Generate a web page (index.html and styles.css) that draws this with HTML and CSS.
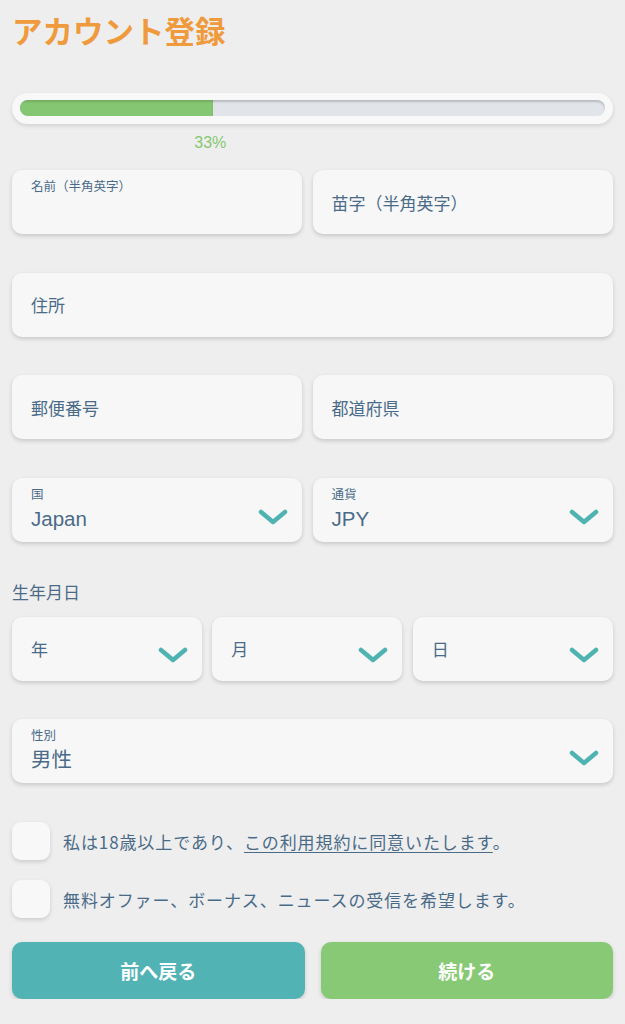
FILE: index.html
```html
<!DOCTYPE html>
<html lang="ja">
<head>
    <meta charset="UTF-8" />
    <meta name="viewport" content="width=device-width, initial-scale=1.0"/>
    <title>アカウント登録</title>
    <link rel="stylesheet" href="styles.css">
</head>
<body>
    <div id="app">
        <h1 class="title">アカウント登録</h1>

        <!-- Progress -->
        <div class="progress">
            <div class="progress-track">
                <div class="progress-fill" style="width: 33%"></div>
            </div>
        </div>
        <div class="progress-label">
            <span class="progress-spacer" style="width: 33%"></span>
            <span class="progress-text">33%</span>
        </div>

        <!-- Name -->
        <div class="row first">
            <div class="col">
                <div class="field">
                    <span class="field-label">名前（半角英字）</span>
                </div>
            </div>
            <div class="col">
                <div class="field">
                    <span class="field-placeholder">苗字（半角英字）</span>
                </div>
            </div>
        </div>

        <div class="row">
            <div class="col">
                <div class="field">
                    <span class="field-placeholder">住所</span>
                </div>
            </div>
        </div>

        <div class="row">
            <div class="col">
                <div class="field">
                    <span class="field-placeholder">郵便番号</span>
                </div>
            </div>
            <div class="col">
                <div class="field">
                    <span class="field-placeholder">都道府県</span>
                </div>
            </div>
        </div>

        <div class="row">
            <div class="col">
                <div class="field select">
                    <div class="select-body">
                        <span class="field-label">国</span>
                        <span class="field-value">Japan</span>
                    </div>
                    <svg class="chevron" viewBox="0 0 30 16"><path d="M3 3 L15 13 L27 3"/></svg>
                </div>
            </div>
            <div class="col">
                <div class="field select">
                    <div class="select-body">
                        <span class="field-label">通貨</span>
                        <span class="field-value">JPY</span>
                    </div>
                    <svg class="chevron" viewBox="0 0 30 16"><path d="M3 3 L15 13 L27 3"/></svg>
                </div>
            </div>
        </div>

        <div class="section-label">生年月日</div>
        <div class="row">
            <div class="col">
                <div class="field select">
                    <span class="field-placeholder">年</span>
                    <svg class="chevron low" viewBox="0 0 30 16"><path d="M3 3 L15 13 L27 3"/></svg>
                </div>
            </div>
            <div class="col">
                <div class="field select">
                    <span class="field-placeholder">月</span>
                    <svg class="chevron low" viewBox="0 0 30 16"><path d="M3 3 L15 13 L27 3"/></svg>
                </div>
            </div>
            <div class="col">
                <div class="field select">
                    <span class="field-placeholder">日</span>
                    <svg class="chevron low" viewBox="0 0 30 16"><path d="M3 3 L15 13 L27 3"/></svg>
                </div>
            </div>
        </div>

        <div class="row">
            <div class="col">
                <div class="field select">
                    <div class="select-body">
                        <span class="field-label">性別</span>
                        <span class="field-value">男性</span>
                    </div>
                    <svg class="chevron" viewBox="0 0 30 16"><path d="M3 3 L15 13 L27 3"/></svg>
                </div>
            </div>
        </div>

        <!-- Agreements -->
        <div class="checks">
            <label class="check">
                <span class="box"></span>
                <span class="check-text">私は18歳以上であり、<a href="#" class="link">この利用規約に同意いたします</a>。</span>
            </label>
            <label class="check">
                <span class="box"></span>
                <span class="check-text">無料オファー、ボーナス、ニュースの受信を希望します。</span>
            </label>
        </div>

        <div class="buttons">
            <button class="btn btn-back">前へ戻る</button>
            <button class="btn btn-next">続ける</button>
        </div>
    </div>
</body>
</html>
```

FILE: styles.css
```css
body {
    margin: 0;
    padding: 0;
    background: #eeeeee;
    font-family: "Liberation Sans", "Noto Sans CJK JP", sans-serif;
    color: #4a6b88;
}

#app {
    padding: 0 12px;
}

.title {
    margin: 12px 0 0;
    font-size: 30.5px;
    line-height: 36px;
    height: 36px;
    font-weight: 700;
    color: #ef9a3c;
    font-family: "Noto Sans CJK JP", sans-serif;
}

.progress {
    margin-top: 45px;
    background: #f8f8f8;
    border-radius: 16px;
    padding: 7px 8px 8px;
    box-shadow: 0 2px 4px rgba(0, 0, 0, 0.12);
}

.progress-track {
    height: 16px;
    border-radius: 8px;
    background: #e1e4e9;
    box-shadow: inset 0 2px 2px rgba(0, 0, 0, 0.18);
    overflow: hidden;
}

.progress-fill {
    height: 100%;
    background: #84c671;
    box-shadow: inset 0 2px 2px rgba(0, 0, 0, 0.12);
}

.progress-label {
    display: flex;
    margin-top: 9px;
    height: 20px;
    line-height: 20px;
}

.progress-text {
    transform: translateX(-50%);
    font-size: 16px;
    color: #86c872;
}

/* rows: equal columns, gutter inside every column but the last */
.row {
    display: grid;
    grid-auto-flow: column;
    grid-auto-columns: 1fr;
    margin-bottom: 38.7px;
}

.row.first {
    margin-top: 17px;
}

.col {
    min-width: 0;
}

.col:not(:last-child) {
    padding-right: 10.5px;
}

.field {
    height: 64px;
    box-sizing: border-box;
    background: #f7f7f7;
    border-radius: 10px;
    box-shadow: 0 2px 4px rgba(0, 0, 0, 0.16);
    padding: 0 19px;
    display: flex;
    align-items: center;
}

.field .field-label:only-child {
    align-self: flex-start;
    margin-top: 8px;
}

.field-label {
    font-size: 12.5px;
    line-height: 16px;
    font-family: "Noto Sans CJK JP", sans-serif;
}

.field-placeholder {
    font-size: 17px;
    font-family: "Noto Sans CJK JP", sans-serif;
}

.select {
    justify-content: space-between;
    padding-right: 14px;
}

.select-body {
    display: flex;
    flex-direction: column;
    align-self: flex-start;
    padding-top: 8px;
}

.field-value {
    font-size: 20.5px;
    line-height: 28px;
    margin-top: 3px;
}

.chevron {
    width: 30px;
    height: 16px;
    fill: none;
    stroke: #4fb3b2;
    stroke-width: 4.5;
    stroke-linecap: round;
    stroke-linejoin: round;
    margin-top: 13px;
}

.chevron.low {
    margin-top: 12px;
}

.section-label {
    margin-top: -1px;
    font-size: 17px;
    line-height: 24px;
    font-family: "Noto Sans CJK JP", sans-serif;
    margin-bottom: 13px;
}

.checks {
    display: flex;
    flex-direction: column;
    gap: 20px;
    margin-top: 39px;
}

.check {
    display: flex;
    align-items: center;
    gap: 13px;
}

.box {
    width: 38px;
    height: 38px;
    flex: none;
    border-radius: 9px;
    background: #f8f8f8;
    box-shadow: 0 2px 4px rgba(0, 0, 0, 0.14);
}

.check-text {
    font-size: 17px;
    font-family: "Noto Sans CJK JP", sans-serif;
    letter-spacing: 0.9px;
}

.link {
    color: inherit;
    text-decoration: underline;
    text-underline-offset: 3px;
}

.buttons {
    display: flex;
    gap: 16px;
    margin-top: 24px;
}

.btn {
    flex: 1;
    height: 57px;
    border: none;
    border-radius: 10px;
    color: #fff;
    font-size: 19px;
    font-weight: 700;
    font-family: "Noto Sans CJK JP", sans-serif;
    box-shadow: 0 2px 4px rgba(0, 0, 0, 0.16);
}

.btn-back {
    background: #52b3b5;
}

.btn-next {
    background: #88c975;
}
```
